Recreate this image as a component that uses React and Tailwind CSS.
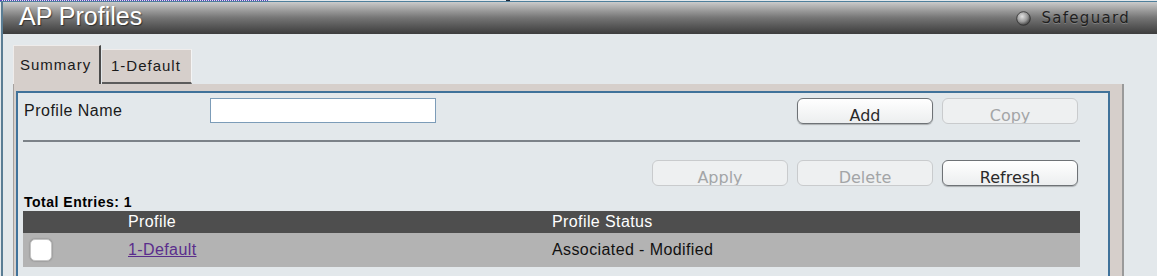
import React from "react";

const sans = "font-['Liberation_Sans',Arial,sans-serif]";
const deja = "font-['DejaVu_Sans',Verdana,sans-serif]";

function Btn({ label, disabled }) {
  return (
    <div
      className={
        disabled
          ? "w-[136px] h-[26px] rounded-[6px] border border-[#c9cbcd] bg-[#eef0f1] flex justify-center overflow-hidden pt-[9px] text-[16px] leading-[16px] text-[#a3a5a7] font-['DejaVu_Sans',Verdana,sans-serif]"
          : "w-[136px] h-[26px] rounded-[6px] border border-[#6e7276] bg-gradient-to-b from-white to-[#eceeef] shadow-[0_1px_1px_rgba(0,0,0,0.25)] flex justify-center overflow-hidden pt-[9px] text-[16px] leading-[16px] text-[#2a2a2a] font-['DejaVu_Sans',Verdana,sans-serif]"
      }
    >
      {label}
    </div>
  );
}

export default function App() {
  return (
    <div className={`w-[1157px] h-[276px] overflow-hidden bg-[#e3e8eb] ${sans}`}>
      {/* top strip */}
      <div className="h-[1px] flex bg-[#e3e8eb]">
        <span className="w-[268px] border-t border-dotted border-[#5a3fc0]" />
        <span className="ml-[238px] w-[4px] h-[1px] bg-[#1c2433]" />
      </div>
      <div className="h-[1px] bg-[#4f7f9b]" />

      <div className="pl-[1px]">
        <div className="border-l-2 border-[#5a7d94]">
          {/* header */}
          <div className="h-[32px] flex items-start justify-between bg-gradient-to-b from-[#cbcbcb] via-[#747474] to-[#3d3d3d]">
            <span className="pl-[16px] text-[25px] leading-[29px] text-white [text-shadow:1px_1px_1px_rgba(0,0,0,0.5)]">
              AP Profiles
            </span>
            <div className="flex items-center gap-[10px] pr-[27px] pt-[8px]">
              <svg width="15" height="15" viewBox="0 0 15 15">
                <defs>
                  <radialGradient id="sg" cx="40%" cy="35%" r="65%">
                    <stop offset="0%" stopColor="#e2e2e2" />
                    <stop offset="60%" stopColor="#9a9a9a" />
                    <stop offset="100%" stopColor="#444" />
                  </radialGradient>
                </defs>
                <circle cx="7.5" cy="7.5" r="6.8" fill="url(#sg)" stroke="#2e2e2e" strokeWidth="0.8" />
              </svg>
              <span className={`${deja} text-[15px] leading-[16px] tracking-[1.3px] text-[#1f1f1f] [text-shadow:0_1px_0_rgba(255,255,255,0.2)]`}>
                Safeguard
              </span>
            </div>
          </div>

          {/* tabs */}
          <div className="pl-[10px] pt-[11px] flex items-end">
            <div className="w-[88px] h-[39px] bg-[#d6cfcb] border-t border-l border-[#efeceb] border-r-2 border-r-[#4a4a4a] pl-[6px] text-[15px] leading-[37px] tracking-[1px] text-[#1a1a1a]">
              Summary
            </div>
            <div className="ml-[1px] w-[90px] h-[35px] bg-[#d6cfcb] border-t border-[#efeceb] border-r border-r-[#f4f4f4] border-b-2 border-b-[#5c5c5c] pl-[9px] text-[15px] leading-[31px] tracking-[1px] text-[#1a1a1a]">
              1-Default
            </div>
          </div>

          {/* beige panel */}
          <div className="ml-[10px] w-[1111px] h-[200px] bg-[#d6cfcb] border-l border-[#a7a19e] border-r-2 border-r-[#9a9a9a] pl-[2px] pt-[7px]">
            <div className="w-[1094px] h-[200px] border-2 border-[#40729a] bg-[#e3e8eb] pl-[6px] pr-[30px] pt-[5px]">
              {/* row 1 */}
              <div className="flex items-center h-[25px]">
                <div className="w-[186px] text-[16px] tracking-[0.5px] text-[#1a1a1a]">Profile Name</div>
                <div className="w-[226px] h-[25px] bg-white border border-[#7c9cb8]" />
                <div className="flex-1" />
                <div className="flex gap-[9px]">
                  <Btn label="Add" />
                  <Btn label="Copy" disabled />
                </div>
              </div>

              <div className="-ml-px mt-[17px] w-[1057px] h-[2px] bg-[#7c8288]" />

              {/* row 2 */}
              <div className="mt-[18px] flex justify-end gap-[9px]">
                <Btn label="Apply" disabled />
                <Btn label="Delete" disabled />
                <Btn label="Refresh" />
              </div>

              <div className="mt-[8px] text-[14px] leading-[17px] font-bold tracking-[0.5px] text-black">
                Total Entries: 1
              </div>

              {/* table */}
              <div className="-ml-px w-[1057px]">
                <div className="flex h-[22px] bg-[#4e4e4e] text-white text-[16px] leading-[22px] tracking-[0.4px]">
                  <div className="w-[105px]" />
                  <div className="w-[424px]">Profile</div>
                  <div className="flex-1">Profile Status</div>
                </div>
                <div className="flex items-center h-[34px] bg-[#b3b3b3] text-[16px] tracking-[0.4px] text-[#111]">
                  <div className="w-[105px] pl-[7px]">
                    <div className="w-[22px] h-[22px] rounded-[5px] bg-white border border-[#c4c4c4] shadow-[0_0_2px_rgba(0,0,0,0.35)]" />
                  </div>
                  <div className="w-[424px]">
                    <span className="text-[#5a2d8c] underline">1-Default</span>
                  </div>
                  <div className="flex-1">Associated - Modified</div>
                </div>
              </div>
            </div>
          </div>
        </div>
      </div>
    </div>
  );
}
